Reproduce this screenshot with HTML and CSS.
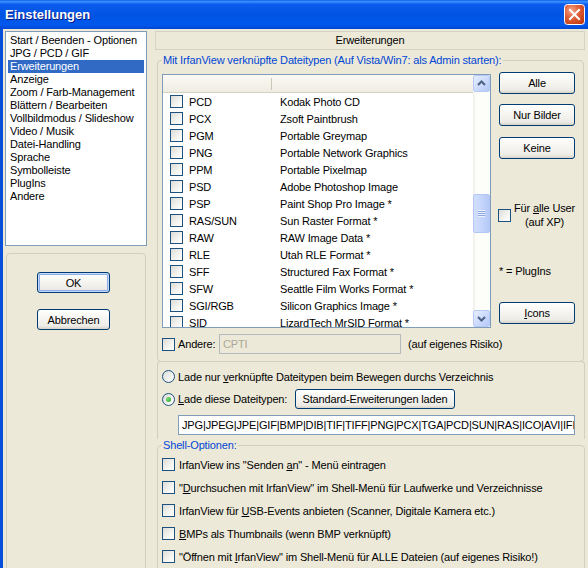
FILE: index.html
```html
<!DOCTYPE html>
<html lang="de">
<head>
    <meta charset="UTF-8">
    <title>Einstellungen</title>
    <link rel="stylesheet" href="styles.css">
</head>
<body>
    <div class="window">
        <div class="titlebar">
            <span class="title">Einstellungen</span>
            <span class="close">
                <svg width="21" height="21" viewBox="0 0 21 21">
                    <defs>
                        <radialGradient id="cl" cx="35%" cy="30%" r="80%">
                            <stop offset="0" stop-color="#F2A58A"/>
                            <stop offset="0.45" stop-color="#E2623A"/>
                            <stop offset="1" stop-color="#C03A12"/>
                        </radialGradient>
                    </defs>
                    <rect x="0.5" y="0.5" width="20" height="20" rx="3" fill="url(#cl)" stroke="#fff"/>
                    <path d="M6 6 L15 15 M15 6 L6 15" stroke="#fff" stroke-width="2" stroke-linecap="square"/>
                </svg>
            </span>
        </div>
        <div class="client">
            <div class="sidebar">
                <ul class="listbox">
                    <li>Start / Beenden - Optionen</li>
                    <li>JPG / PCD / GIF</li>
                    <li class="selected">Erweiterungen</li>
                    <li>Anzeige</li>
                    <li>Zoom / Farb-Management</li>
                    <li>Blättern / Bearbeiten</li>
                    <li>Vollbildmodus / Slideshow</li>
                    <li>Video / Musik</li>
                    <li>Datei-Handling</li>
                    <li>Sprache</li>
                    <li>Symbolleiste</li>
                    <li>PlugIns</li>
                    <li>Andere</li>
                </ul>
                <div class="actions">
                    <button class="btn btn-default">OK</button>
                    <button class="btn">Abbrechen</button>
                </div>
            </div>

            <div class="main">
                <div class="page-title">Erweiterungen</div>

                <fieldset class="group group-types">
                    <legend>Mit IrfanView verknüpfte Dateitypen (Auf Vista/Win7: als Admin starten):</legend>
                    <div class="types-row">
                        <div class="listview">
                            <div class="lv-body">
                                <div class="lv-header"><span class="lv-h1"></span><span class="lv-h2"></span></div>
                                <div class="lv-rows">
                                    <div class="lv-row"><span class="chk"></span><span class="lv-ext">PCD</span><span>Kodak Photo CD</span></div>
                                    <div class="lv-row"><span class="chk"></span><span class="lv-ext">PCX</span><span>Zsoft Paintbrush</span></div>
                                    <div class="lv-row"><span class="chk"></span><span class="lv-ext">PGM</span><span>Portable Greymap</span></div>
                                    <div class="lv-row"><span class="chk"></span><span class="lv-ext">PNG</span><span>Portable Network Graphics</span></div>
                                    <div class="lv-row"><span class="chk"></span><span class="lv-ext">PPM</span><span>Portable Pixelmap</span></div>
                                    <div class="lv-row"><span class="chk"></span><span class="lv-ext">PSD</span><span>Adobe Photoshop Image</span></div>
                                    <div class="lv-row"><span class="chk"></span><span class="lv-ext">PSP</span><span>Paint Shop Pro Image *</span></div>
                                    <div class="lv-row"><span class="chk"></span><span class="lv-ext">RAS/SUN</span><span>Sun Raster Format *</span></div>
                                    <div class="lv-row"><span class="chk"></span><span class="lv-ext">RAW</span><span>RAW Image Data *</span></div>
                                    <div class="lv-row"><span class="chk"></span><span class="lv-ext">RLE</span><span>Utah RLE Format *</span></div>
                                    <div class="lv-row"><span class="chk"></span><span class="lv-ext">SFF</span><span>Structured Fax Format *</span></div>
                                    <div class="lv-row"><span class="chk"></span><span class="lv-ext">SFW</span><span>Seattle Film Works Format *</span></div>
                                    <div class="lv-row"><span class="chk"></span><span class="lv-ext">SGI/RGB</span><span>Silicon Graphics Image *</span></div>
                                    <div class="lv-row"><span class="chk"></span><span class="lv-ext">SID</span><span>LizardTech MrSID Format *</span></div>
                                </div>
                            </div>
                            <div class="scrollbar">
                                <div class="sb-btn">
                                    <svg width="15" height="15" viewBox="0 0 15 15"><polyline points="4,9 7.5,5.5 11,9" fill="none" stroke="#4D6185" stroke-width="2"/></svg>
                                </div>
                                <div class="sb-track">
                                    <div class="sb-thumb"><span class="grip"></span></div>
                                </div>
                                <div class="sb-btn">
                                    <svg width="15" height="15" viewBox="0 0 15 15"><polyline points="4,6 7.5,9.5 11,6" fill="none" stroke="#4D6185" stroke-width="2"/></svg>
                                </div>
                            </div>
                        </div>

                        <div class="types-side">
                            <button class="btn btn-side">Alle</button>
                            <button class="btn btn-side btn-nur">Nur Bilder</button>
                            <button class="btn btn-side btn-keine">Keine</button>
                            <div class="all-users">
                                <span class="chk"></span>
                                <span class="all-users-text">Für <u>a</u>lle User<br>(auf XP)</span>
                            </div>
                            <div class="plugins-note">* = PlugIns</div>
                            <button class="btn btn-side btn-icons"><u>I</u>cons</button>
                        </div>
                    </div>

                    <div class="other-row">
                        <span class="chk"></span>
                        <span class="other-label">Andere:</span>
                        <span class="input input-disabled input-other">CPTI</span>
                        <span class="other-note">(auf eigenes Risiko)</span>
                    </div>
                </fieldset>

                <fieldset class="group group-load">
                    <div class="radio-row">
                        <span class="radio"></span>
                        <span>Lade nur <u>v</u>erknüpfte Dateitypen beim Bewegen durchs Verzeichnis</span>
                    </div>
                    <div class="radio-row radio-row-btn">
                        <span class="radio checked"></span>
                        <span class="load-label"><u>L</u>ade diese Dateitypen:</span>
                        <button class="btn btn-std">Standard-Erweiterungen laden</button>
                    </div>
                    <div class="input input-types">JPG|JPEG|JPE|GIF|BMP|DIB|TIF|TIFF|PNG|PCX|TGA|PCD|SUN|RAS|ICO|AVI|IFF|P</div>
                </fieldset>

                <fieldset class="group group-shell">
                    <legend>Shell-Optionen:</legend>
                    <div class="shell-row"><span class="chk"></span><span>IrfanView ins "Senden <u>a</u>n" - Menü eintragen</span></div>
                    <div class="shell-row"><span class="chk"></span><span>"<u>D</u>urchsuchen mit IrfanView" im Shell-Menü für Laufwerke und Verzeichnisse</span></div>
                    <div class="shell-row"><span class="chk"></span><span>IrfanView für <u>U</u>SB-Events anbieten (Scanner, Digitale Kamera etc.)</span></div>
                    <div class="shell-row"><span class="chk"></span><span><u>B</u>MPs als Thumbnails (wenn BMP verknüpft)</span></div>
                    <div class="shell-row"><span class="chk"></span><span>"Öffnen mit <u>I</u>rfanView" im Shell-Menü für ALLE Dateien (auf eigenes Risiko!)</span></div>
                </fieldset>
            </div>
        </div>
    </div>
</body>
</html>
```

FILE: styles.css
```css
body {
    margin: 0;
    background: #ECE9D8;
}

.window {
    width: 588px;
    height: 568px;
    overflow: hidden;
    background: #ECE9D8;
    font-family: "Liberation Sans", Arial, sans-serif;
    font-size: 11px;
    letter-spacing: -0.15px;
    color: #000;
}

/* XP Luna title bar */
.titlebar {
    height: 29px;
    display: flex;
    align-items: center;
    justify-content: space-between;
    padding: 0 3px 0 5px;
    background: linear-gradient(to bottom, #0A5FE8 0%, #3D93FF 6%, #0B5CEE 14%, #0054E3 50%, #0058EC 86%, #0046D4 100%);
}

.title {
    color: #fff;
    font-weight: bold;
    font-size: 13px;
    letter-spacing: 0;
    text-shadow: 1px 1px #0A1883;
}

.close {
    display: flex;
}

.client {
    display: flex;
    height: 539px;
    border-left: 3px solid #0650DC;
}

/* left column */
.sidebar {
    width: 142px;
    margin-left: 2px;
    padding-top: 2px;
}

.listbox {
    list-style: none;
    margin: 0;
    padding: 2px;
    height: 215px;
    box-sizing: border-box;
    border: 1px solid #7F9DB9;
    background: #fff;
}

.listbox li {
    height: 13px;
    line-height: 13px;
    padding-left: 2px;
    white-space: nowrap;
}

.listbox li.selected {
    background: #316AC5;
    color: #fff;
}

.actions {
    margin: 7px 0 0 1px;
    width: 140px;
    height: 320px;
    box-sizing: border-box;
    border: 1px solid #D0D0BF;
    border-radius: 4px;
    padding: 18px 0 0 30px;
    display: flex;
    flex-direction: column;
    align-items: flex-start;
    gap: 16px;
}

/* buttons */
.btn {
    width: 73px;
    height: 21px;
    padding: 0;
    border: 1px solid #003C74;
    border-radius: 3px;
    background: linear-gradient(to bottom, #FFFFFF 0%, #F6F5F1 45%, #ECEBE6 85%, #D8D2C6 100%);
    font-family: inherit;
    font-size: 11px;
    letter-spacing: inherit;
    color: #000;
}

.btn-default {
    box-shadow: inset 0 0 0 1px #C4D8FB, inset 0 0 0 2px #8DAEE8;
}

/* right column */
.main {
    width: 430px;
    margin-left: 8px;
    padding-top: 2px;
}

.page-title {
    height: 19px;
    box-sizing: border-box;
    border: 1px solid #D6D3C6;
    text-align: center;
    line-height: 17px;
}

.group {
    margin: 0 0 0 2px;
    padding: 0 4px;
    border: 1px solid #D0D0BF;
    border-radius: 4px;
    min-width: 0;
}

.group legend {
    padding: 0 1px;
    line-height: 13px;
    color: #0046D5;
}

.group-types {
    width: 427px;
    box-sizing: border-box;
    margin-top: 4px;
    padding-top: 5px;
    padding-bottom: 7px;
}

.types-row {
    display: flex;
    align-items: flex-start;
}

/* list view */
.listview {
    display: flex;
    width: 329px;
    height: 254px;
    margin-top: 2px;
    box-sizing: border-box;
    border: 1px solid #7F9DB9;
    background: #fff;
}

.lv-body {
    flex: 1;
    overflow: hidden;
}

.lv-header {
    display: flex;
    align-items: center;
    height: 18px;
    box-sizing: border-box;
    background: linear-gradient(to bottom, #FAF9F4, #EFEDE2);
    border-bottom: 1px solid #D6D2C2;
}

.lv-h1 {
    width: 108px;
    height: 12px;
    border-right: 1px solid #CBC7B8;
}

.lv-row {
    display: flex;
    align-items: center;
    height: 17px;
    padding-left: 7px;
    white-space: nowrap;
}

.lv-row .chk {
    margin-right: 6px;
}

.lv-ext {
    width: 91px;
}

.chk {
    flex: none;
    display: inline-block;
    width: 13px;
    height: 13px;
    box-sizing: border-box;
    border: 1px solid #1C5180;
    background: linear-gradient(135deg, #DCDCD7 0%, #F4F4F1 60%, #FFFFFF 100%);
}

.scrollbar {
    width: 17px;
    display: flex;
    flex-direction: column;
}

.sb-btn {
    height: 17px;
    box-sizing: border-box;
    border: 1px solid #B7CAF5;
    border-radius: 2px;
    background: linear-gradient(135deg, #E6EEFD 0%, #C9D8FC 60%, #B4C8F6 100%);
    display: flex;
    align-items: center;
    justify-content: center;
}

.sb-track {
    flex: 1;
    background: linear-gradient(to right, #EEEDE5, #FDFDFA 3px);
}

.sb-thumb {
    height: 39px;
    margin-top: 102px;
    box-sizing: border-box;
    border: 1px solid #B3C6F4;
    border-radius: 2px;
    background: linear-gradient(to right, #D2DFFC 0%, #C2D3FC 60%, #B6C9F6 100%);
    display: flex;
    align-items: center;
    justify-content: center;
}

.grip {
    width: 7px;
    height: 7px;
    background: repeating-linear-gradient(to bottom, #EEF4FE 0, #EEF4FE 1px, #8CA6E3 1px, #8CA6E3 2px);
}

.types-side {
    width: 76px;
    margin-left: 8px;
    display: flex;
    flex-direction: column;
}

.btn-side {
    width: 76px;
    height: 22px;
}

.btn-nur {
    margin-top: 10px;
}

.btn-keine {
    margin-top: 11px;
}

.all-users {
    display: flex;
    align-items: center;
    height: 28px;
    margin: 42px 0 0 -1px;
}

.all-users-text {
    margin-left: 3px;
    text-align: center;
    line-height: 14px;
    white-space: nowrap;
}

.plugins-note {
    margin-top: 36px;
    line-height: 13px;
}

.btn-icons {
    margin-top: 24px;
}

.other-row {
    display: flex;
    align-items: center;
    margin-top: 6px;
    height: 20px;
}

.other-label {
    width: 41px;
    margin-left: 3px;
}

.input {
    display: block;
    height: 20px;
    box-sizing: border-box;
    border: 1px solid #7F9DB9;
    background: #fff;
    line-height: 18px;
    padding-left: 3px;
    white-space: nowrap;
    overflow: hidden;
}

.input-disabled {
    border-color: #B4B9BE;
    background: #ECE9D8;
    color: #ACA899;
}

.input-other {
    width: 182px;
}

.other-note {
    margin-left: 7px;
}

/* load options */
.group-load {
    width: 428px;
    box-sizing: border-box;
    margin-top: -1px;
    padding-top: 8px;
    padding-bottom: 4px;
    border-bottom: 0;
    border-radius: 4px 4px 0 0;
}

.radio-row {
    display: flex;
    align-items: center;
    height: 13px;
    white-space: nowrap;
}

.radio-row-btn {
    height: 20px;
    margin-top: 6px;
}

.radio {
    flex: none;
    width: 13px;
    height: 13px;
    box-sizing: border-box;
    margin-right: 3px;
    border: 1px solid #1C5180;
    border-radius: 50%;
    background: linear-gradient(135deg, #DCDCD7 0%, #FFFFFF 100%);
    display: inline-flex;
    align-items: center;
    justify-content: center;
}

.radio.checked::after {
    content: "";
    width: 5px;
    height: 5px;
    border-radius: 50%;
    background: radial-gradient(circle at 35% 35%, #7BE07B, #21A121);
}

.load-label {
    width: 117px;
}

.btn-std {
    width: 160px;
    height: 20px;
}

.input-types {
    width: 397px;
    margin: 6px 0 0 16px;
}

/* shell options */
.group-shell {
    width: 428px;
    box-sizing: border-box;
    padding-top: 6px;
    padding-bottom: 10px;
}

.shell-row {
    display: flex;
    align-items: center;
    height: 13px;
    white-space: nowrap;
    margin-bottom: 10px;
}

.shell-row .chk {
    margin-right: 4px;
}
```
